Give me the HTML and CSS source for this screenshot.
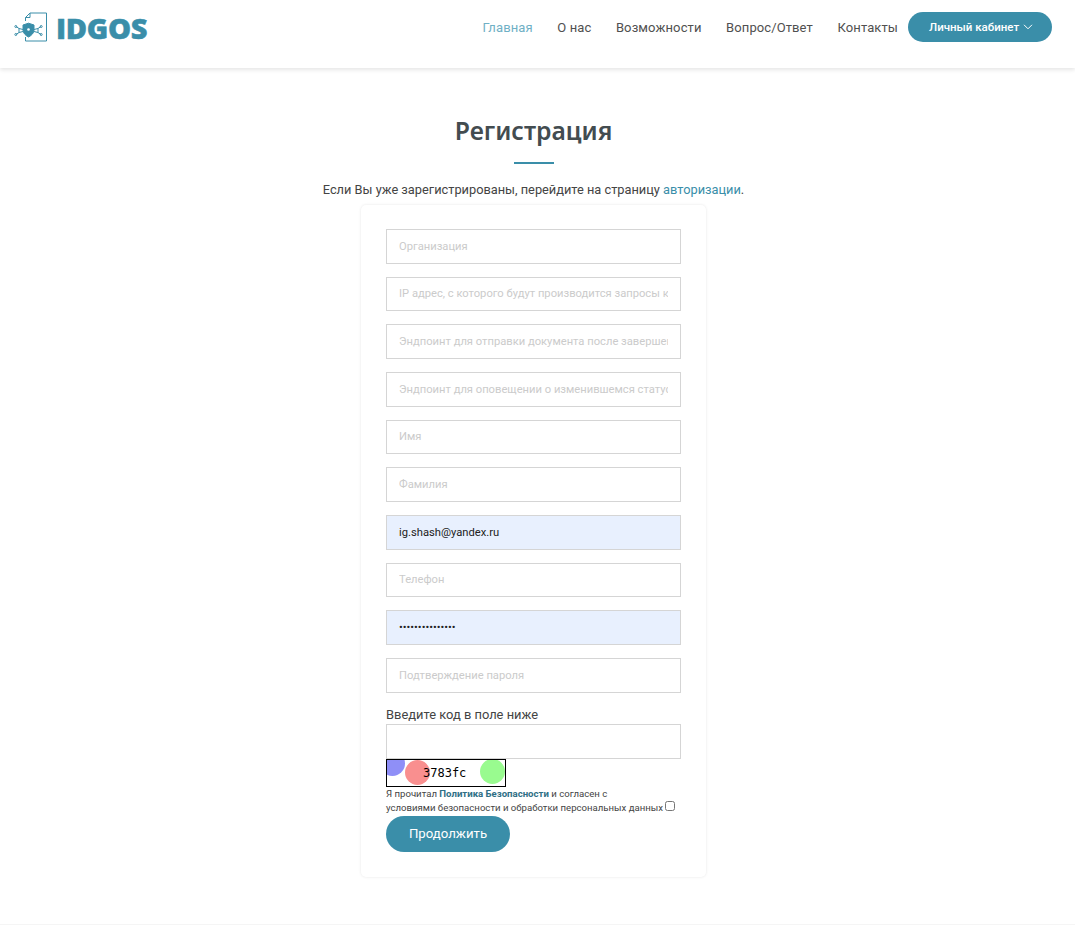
FILE: index.html
```html
<!DOCTYPE html>
<html lang="ru">
<head>
    <meta charset="UTF-8">
    <meta name="viewport" content="width=device-width, initial-scale=1.0">
    <title>Регистрация</title>
    <link rel="stylesheet" href="styles.css">
</head>
<body>
    <header class="navbar">
        <a class="logo" href="#">
            <svg class="logo-icon" width="34" height="32" viewBox="0 0 34 32" fill="none" stroke="#3a8ea9" stroke-width="1">
                <!-- document with folded corner -->
                <path d="M11.500 10V6.500L16 2H32.500V30H11.500V26"/>
                <path d="M11.500 6.500H16V2"/>
                <!-- wires -->
                <path d="M2 15.500l3 2 4 1M2 23.500l3-2 4-1M5 17.500v4"/>
                <path d="M27 15.500l-3 2-4 1M27 23.500l-3-2-4-1M24 17.500v4"/>
                <circle cx="1.800" cy="15.500" r="1" />
                <circle cx="1.800" cy="23.500" r="1" />
                <circle cx="27.200" cy="15.500" r="1" />
                <circle cx="27.200" cy="23.500" r="1" />
                <!-- shield -->
                <path d="M9 14l5.500-1.800L20 14v5c0 3-2.500 5.500-5.500 7-3-1.500-5.500-4-5.500-7z" fill="#3a8ea9"/>
                <circle cx="14.500" cy="18.500" r="1.300" fill="#fff" stroke="none"/>
            </svg>
            <span class="logo-text">IDGOS</span>
        </a>
        <nav class="nav-menu">
            <a class="nav-link active" href="#">Главная</a>
            <a class="nav-link" href="#">О нас</a>
            <a class="nav-link" href="#">Возможности</a>
            <a class="nav-link" href="#">Вопрос/Ответ</a>
            <a class="nav-link" href="#">Контакты</a>
            <a class="cabinet-btn" href="#">Личный кабинет
                <svg width="10" height="6" viewBox="0 0 10 6" fill="none" stroke="#fff" stroke-width="1"><path d="M1 .8l4 4 4-4"/></svg>
            </a>
        </nav>
    </header>

    <main class="content">
        <h2 class="title">Регистрация</h2>
        <div class="title-line"></div>
        <p class="subtitle">Если Вы уже зарегистрированы, перейдите на страницу <a href="#">авторизации</a>.</p>

        <form class="card">
            <input class="field" type="text" placeholder="Организация">
            <input class="field" type="text" placeholder="IP адрес, с которого будут производится запросы к API">
            <input class="field" type="text" placeholder="Эндпоинт для отправки документа после завершения">
            <input class="field" type="text" placeholder="Эндпоинт для оповещении о изменившемся статусе">
            <input class="field" type="text" placeholder="Имя">
            <input class="field" type="text" placeholder="Фамилия">
            <input class="field filled" type="text" value="ig.shash@yandex.ru">
            <input class="field" type="text" placeholder="Телефон">
            <input class="field filled" type="password" value="***************">
            <input class="field last" type="password" placeholder="Подтверждение пароля">

            <label class="code-label" for="code">Введите код в поле ниже</label>
            <input class="field code-field" type="text" id="code">
            <div class="captcha">
                <span class="dot dot-blue"></span>
                <span class="dot dot-red"></span>
                <span class="dot dot-green"></span>
                <span class="captcha-text">3783fc</span>
            </div>
            <p class="agree">Я прочитал <a href="#">Политика Безопасности</a> и согласен с<br>условиями безопасности и обработки персональных данных <input type="checkbox" class="agree-check"></p>
            <button class="submit-btn" type="button">Продолжить</button>
        </form>
    </main>
    <div class="footer-line"></div>
</body>
</html>
```

FILE: styles.css
```css
* {
    margin: 0;
    padding: 0;
    box-sizing: border-box;
}

body {
    font-family: 'Roboto', sans-serif;
    background-color: #fff;
    color: #444;
    height: 925px;
    overflow: hidden;
}

a {
    text-decoration: none;
}

.navbar {
    display: flex;
    justify-content: space-between;
    align-items: center;
    height: 68px;
    padding: 0 23px 14px 14px;
    background-color: #fff;
    box-shadow: 0 2px 4px rgba(0, 0, 0, 0.1);
}

.logo {
    display: flex;
    align-items: center;
    gap: 8px;
}

.logo-text {
    font-family: 'Open Sans', sans-serif;
    font-size: 29px;
    font-weight: 800;
    color: #3a8ea9;
    letter-spacing: -0.3px;
    -webkit-text-stroke: 0.5px #3a8ea9;
}

.nav-menu {
    display: flex;
    align-items: center;
}

.nav-link {
    font-size: 13px;
    color: #505050;
    margin-right: 24.600px;
    letter-spacing: 0.1px;
}

.nav-link:nth-child(5) {
    margin-right: 10px;
}

.nav-link.active {
    color: #6fb0c5;
}

.cabinet-btn {
    display: flex;
    align-items: center;
    gap: 4px;
    width: 144px;
    height: 30px;
    padding-left: 21px;
    background-color: #3a8ea9;
    color: #fff;
    font-size: 11.500px;
    font-weight: 500;
    border-radius: 15px;
}

.content {
    display: flex;
    flex-direction: column;
    align-items: center;
    padding-right: 8px;
}

.title {
    font-family: 'Noto Sans', sans-serif;
    font-size: 24.700px;
    font-weight: 600;
    color: #434c50;
    margin-top: 44px;
    line-height: 38px;
}

.title-line {
    width: 40px;
    height: 2px;
    background-color: #3a8ea9;
    margin-top: 12px;
}

.subtitle {
    font-size: 12.800px;
    color: #444;
    margin-top: 18px;
    line-height: 16px;
}

.subtitle a {
    color: #3a8ea9;
}

.card {
    width: 345px;
    height: 672px;
    margin-top: 7px;
    padding: 24px 25px;
    border-radius: 5px;
    box-shadow: 0 0 3px rgba(0, 0, 0, 0.1);
    background-color: #fff;
}

.field {
    display: block;
    width: 295px;
    height: 34.670px;
    margin-bottom: 13px;
    padding: 0 12px;
    border: 1px solid #d5d5d5;
    font-family: 'Roboto', sans-serif;
    font-size: 11.200px;
    color: #222;
    background-color: #fff;
    outline: none;
}

.field::placeholder {
    color: #cbcbcb;
}

.field.filled {
    background-color: #e8f0fe;
}

.field.last {
    margin-bottom: 13.300px;
}

.code-label {
    display: block;
    font-size: 12.900px;
    line-height: 18px;
    color: #444;
}

.code-field {
    height: 35px;
    margin-bottom: 0;
}

.captcha {
    position: relative;
    width: 120px;
    height: 28px;
    border: 1px solid #000;
    overflow: hidden;
    background-color: #fff;
}

.dot {
    position: absolute;
    border-radius: 50%;
    width: 25px;
    height: 25px;
}

.dot-blue {
    left: -7px;
    top: -9px;
    background-color: #8f8ff7;
}

.dot-red {
    left: 18px;
    top: 0;
    background-color: #f98f8f;
}

.dot-green {
    left: 93px;
    top: -1px;
    background-color: #99fb8f;
}

.captcha-text {
    position: absolute;
    left: 36px;
    top: 5px;
    font-family: 'DejaVu Sans Mono', monospace;
    font-size: 12px;
    line-height: 16px;
    color: #000;
}

.agree {
    font-size: 9.600px;
    line-height: 14px;
    color: #444;
}

.agree a {
    color: #2f6f86;
    font-weight: 700;
}

.agree-check {
    width: 10px;
    height: 10px;
    vertical-align: 0;
}

.submit-btn {
    display: block;
    width: 124px;
    height: 36px;
    margin-top: 1px;
    border: none;
    border-radius: 18px;
    background-color: #3a8ea9;
    color: #fff;
    font-family: 'Roboto', sans-serif;
    font-size: 13.200px;
    font-weight: 400;
}

.footer-line {
    height: 1px;
    margin-top: 47px;
    background-color: #f5f5f5;
}
```
